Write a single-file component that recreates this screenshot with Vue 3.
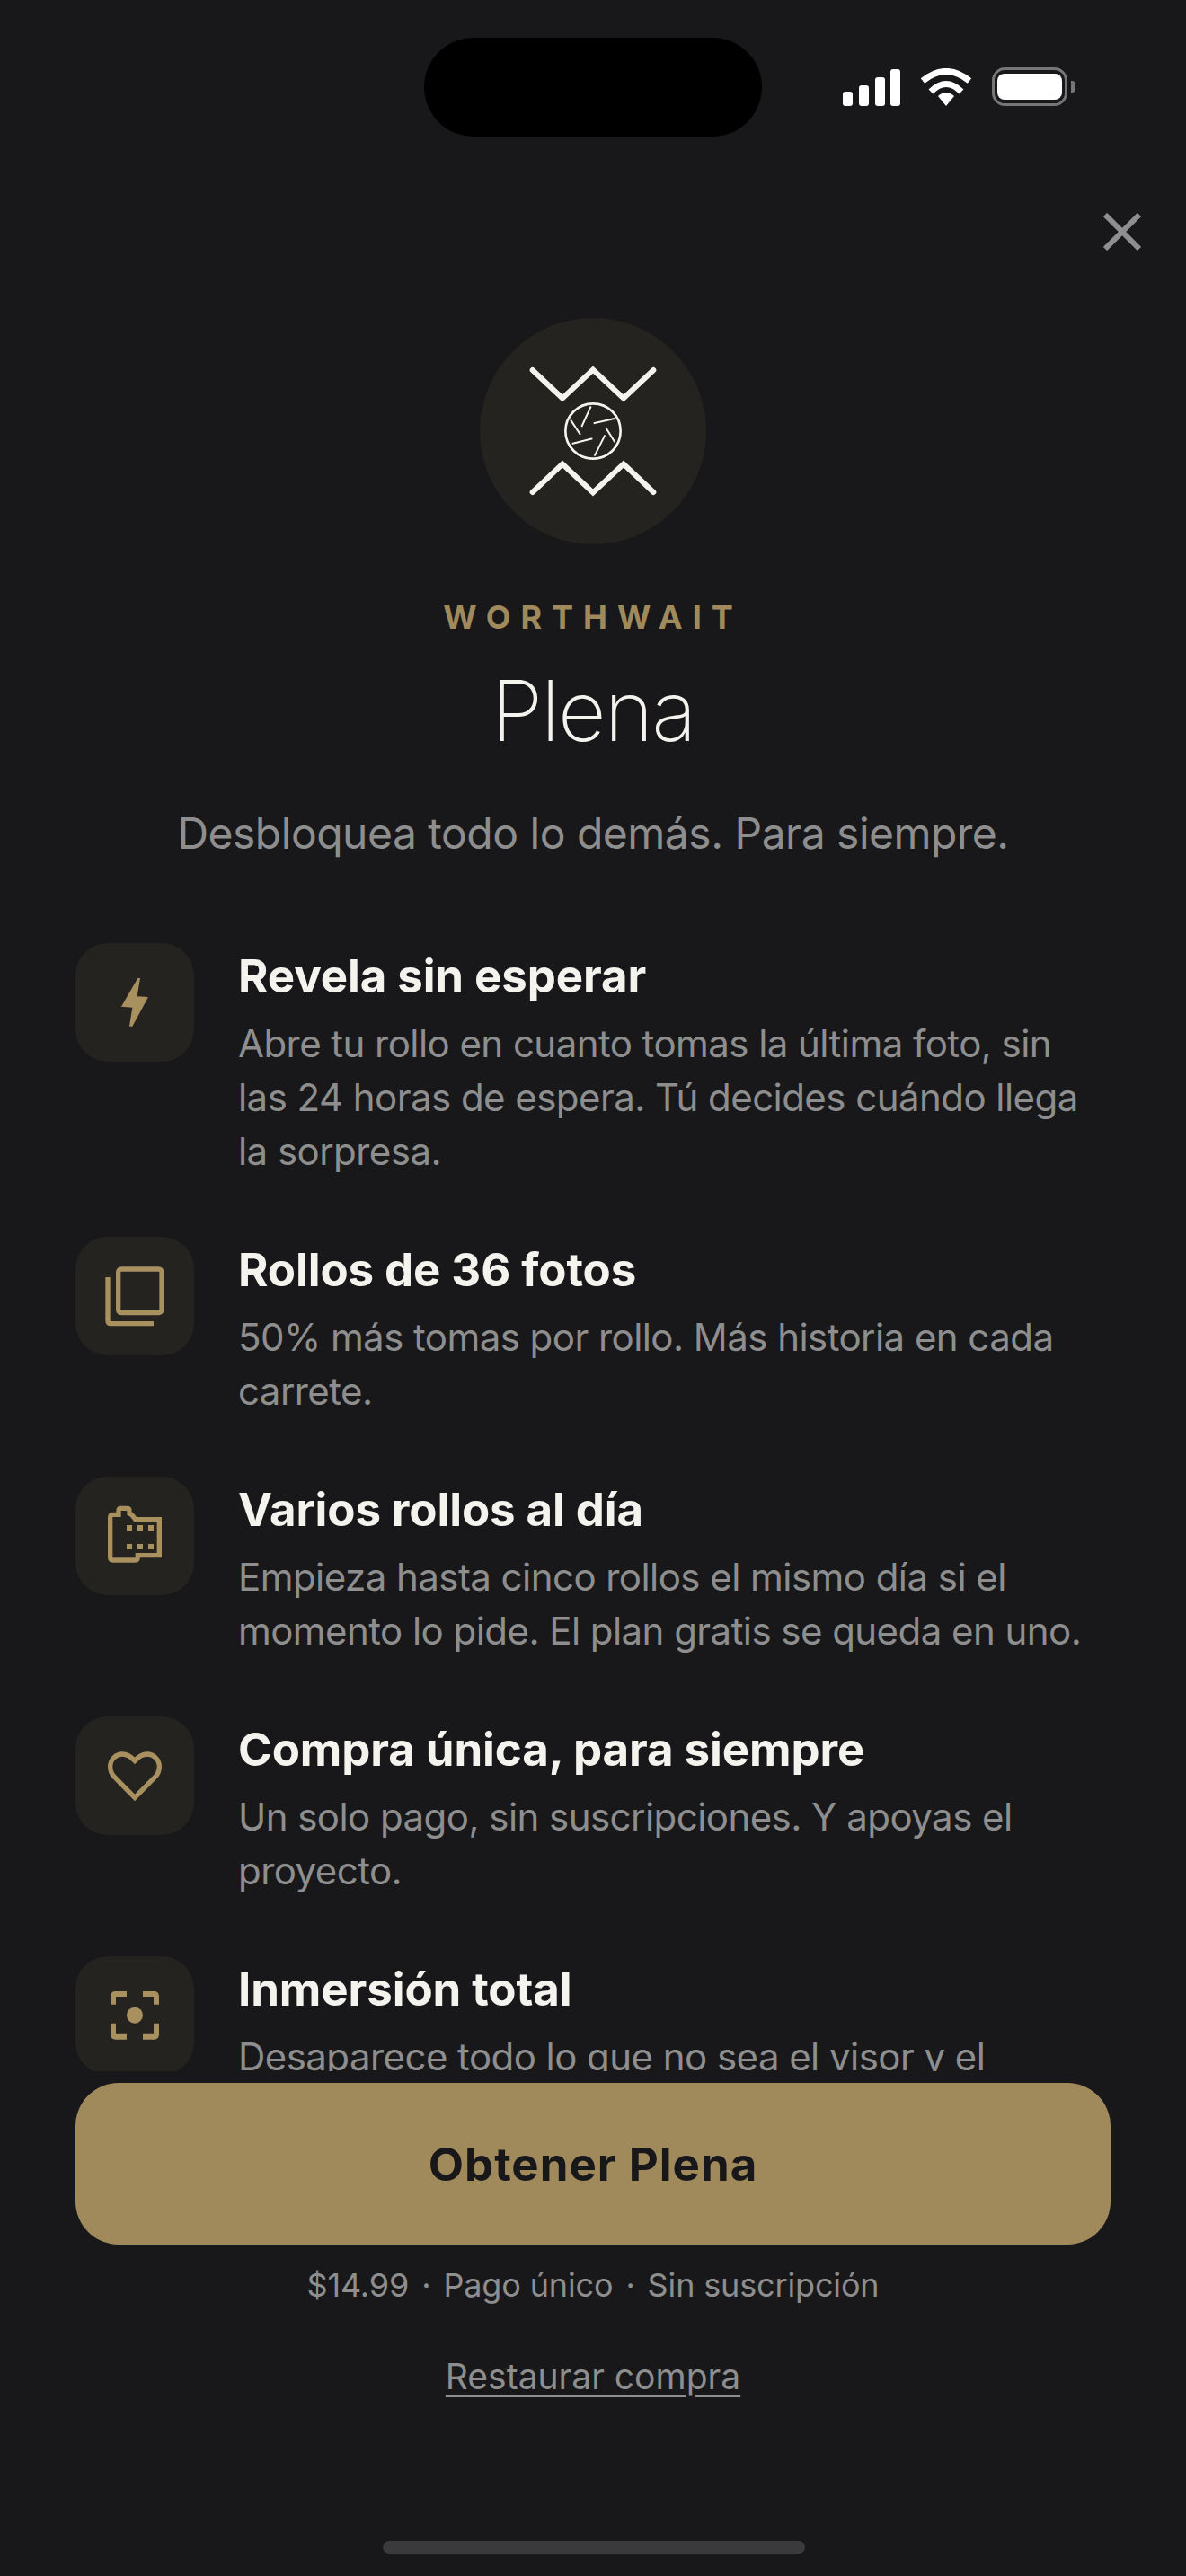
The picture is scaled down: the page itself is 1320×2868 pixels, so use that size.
<script setup>
const features = [
  { key: 'bolt', top: 60, title: 'Revela sin esperar', desc: ['Abre tu rollo en cuanto tomas la última foto, sin', 'las 24 horas de espera. Tú decides cuándo llega', 'la sorpresa.'] },
  { key: 'copy', top: 50, title: 'Rollos de 36 fotos', desc: ['50% más tomas por rollo. Más historia en cada', 'carrete.'] },
  { key: 'film', top: 72, title: 'Varios rollos al día', desc: ['Empieza hasta cinco rollos el mismo día si el', 'momento lo pide. El plan gratis se queda en uno.'] },
  { key: 'heart', top: 62, title: 'Compra única, para siempre', desc: ['Un solo pago, sin suscripciones. Y apoyas el', 'proyecto.'] },
  { key: 'focus', top: 865, title: 'Inmersión total', desc: ['Desaparece todo lo que no sea el visor y el'] },
]
const filmDots = [252, 288, 324].flatMap((x) => [243, 306].map((y) => ({ x: x - 9, y: y - 9 })))
</script>

<template>
  <main class="screen">
    <div class="island"></div>
    <div class="status">
      <svg class="signal" viewBox="0 0 64 41" width="64" height="41">
        <rect x="0" y="25" width="11" height="16" rx="3" />
        <rect x="18" y="18" width="11" height="23" rx="3" />
        <rect x="36" y="9" width="11" height="32" rx="3" />
        <rect x="53" y="0" width="11" height="41" rx="3" />
      </svg>
      <svg class="wifi" viewBox="0 0 58 42" width="58" height="42">
        <path d="M3 14Q29 -7 55 14" />
        <path d="M12 26Q29 9 46 26" />
        <path class="wedge" d="M20 31Q29 23 38 31L29 42Z" />
      </svg>
      <svg class="battery" viewBox="0 0 93 43" width="93" height="43">
        <rect x="1.5" y="1.5" width="81" height="40" rx="13" class="shell" />
        <rect x="6" y="7" width="72" height="29" rx="8" class="charge" />
        <path d="M88 15h1q4 0 4 4v5q0 4-4 4h-1Z" class="cap" />
      </svg>
    </div>
    <button class="close" aria-label="Cerrar">
      <svg viewBox="0 0 42 42" width="42" height="42"><path d="M2 2L40 40M40 2L2 40" /></svg>
    </button>

    <section class="scroll">
      <header class="hero">
        <div class="logo">
          <svg viewBox="72 42 756 756" width="252" height="252">
            <path class="zig" d="M248 216L348 310L450 215L552 310L652 216" />
            <path class="zig" d="M248 624L348 530L450 625L552 530L652 624" />
            <circle class="ring" cx="450" cy="420" r="92" />
            <path class="blades" d="M443 337L412 405M522 378L452 394M492 407L523 457M490 433L455 503M448 445L380 462M375 382L408 432" />
          </svg>
        </div>
        <p class="eyebrow">WORTHWAIT</p>
        <h1>Plena</h1>
        <p class="tagline">Desbloquea todo lo demás. Para siempre.</p>
      </header>

      <ul class="features">
        <li v-for="f in features" :key="f.key" class="feature">
          <div class="tile">
            <svg :viewBox="`72 ${f.top} 396 396`" width="132" height="132">
              <path v-if="f.key === 'bolt'" class="fill" d="M280 177L288 177L278 238L315 240L262 338L252 338L262 275L225 272Z" />
              <g v-else-if="f.key === 'copy'" class="line">
                <rect x="215" y="158" width="145" height="146" rx="10" />
                <path d="M180 185V330Q180 340 190 340H333" />
              </g>
              <g v-else-if="f.key === 'film'">
                <path class="line" d="M280 335V342Q280 351 271 351H197Q188 351 188 342V208Q188 199 197 199H216V186Q216 178 224 178H244Q252 178 252 186V195Q262 199 272 215H352V335Z" />
                <rect v-for="d in filmDots" :key="`${d.x}-${d.y}`" class="fill" :x="d.x" :y="d.y" width="18" height="18" />
              </g>
              <path v-else-if="f.key === 'heart'" class="line" d="M270 333L200 262Q188 248 188 230C188 205 208 188 228 188C245 188 258 197 270 210C282 197 295 188 312 188C332 188 352 205 352 230Q352 248 340 262Z" />
              <g v-else>
                <path class="line thick" d="M198 1026V999Q198 991 206 991H243M297 991H334Q342 991 342 999V1026M342 1089V1126Q342 1134 334 1134H297M243 1134H206Q198 1134 198 1126V1089" />
                <circle class="fill" cx="270" cy="1062" r="27" />
              </g>
            </svg>
          </div>
          <div class="copy">
            <h2>{{ f.title }}</h2>
            <p v-for="line in f.desc" :key="line">{{ line }}</p>
          </div>
        </li>
      </ul>
    </section>

    <footer class="footer">
      <button class="cta">Obtener Plena</button>
      <p class="price"><span>$14.99</span><i>·</i><span>Pago único</span><i>·</i><span>Sin suscripción</span></p>
      <a class="restore">Restaurar compra</a>
    </footer>
    <div class="home"></div>
  </main>
</template>

<style>
html, body { margin: 0; background: #18181a; }
</style>

<style scoped>
.screen {
  position: relative;
  width: 1320px;
  height: 2868px;
  display: flex;
  flex-direction: column;
  background: #18181a;
  color: #f5f3ee;
  font-family: Inter, "Noto Sans", sans-serif;
  overflow: hidden;
}
.island {
  position: absolute;
  left: 472px;
  top: 42px;
  width: 376px;
  height: 110px;
  border-radius: 55px;
  background: #000;
}
.status {
  position: absolute;
  left: 938px;
  top: 75px;
  display: flex;
  align-items: flex-end;
  gap: 22px;
}
.status svg { display: block; }
.signal rect { fill: #fff; }
.wifi path { fill: none; stroke: #fff; stroke-width: 7; }
.wifi .wedge { fill: #fff; stroke: none; }
.shell { fill: none; stroke: #767676; stroke-width: 3; }
.charge { fill: #fff; }
.cap { fill: #767676; }
.close {
  position: absolute;
  left: 1228px;
  top: 237px;
  width: 42px;
  height: 42px;
  padding: 0;
  border: 0;
  background: none;
}
.close svg { display: block; }
.close path { fill: none; stroke: #8e8e8e; stroke-width: 6; }

.scroll {
  height: 2306px;
  flex: none;
  overflow: hidden;
  box-sizing: border-box;
  padding: 354px 84px 0;
}
.hero { display: flex; flex-direction: column; align-items: center; }
.logo {
  width: 252px;
  height: 252px;
  border-radius: 50%;
  background: #252320;
}
.logo svg { display: block; }
.zig { fill: none; stroke: #f5f3ee; stroke-width: 18; stroke-linecap: round; stroke-linejoin: miter; }
.ring { fill: none; stroke: #f5f3ee; stroke-width: 8; }
.blades { fill: none; stroke: #f5f3ee; stroke-width: 6; }
.eyebrow {
  margin: 54px 0 0;
  font-size: 36px;
  line-height: 54px;
  font-weight: 700;
  letter-spacing: 11px;
  color: #a08a5c;
}
h1 {
  margin: 22px 0 0;
  font-size: 93px;
  line-height: 110px;
  font-weight: 200;
  letter-spacing: -2px;
}
.tagline {
  margin: 50px 0 0;
  font-size: 48px;
  line-height: 64px;
  font-weight: 400;
  letter-spacing: -0.5px;
  color: #8e8e8e;
}

.features {
  list-style: none;
  margin: 90px 0 0;
  padding: 0;
  display: flex;
  flex-direction: column;
  gap: 65px;
}
.feature { display: flex; gap: 49px; }
.tile {
  flex: none;
  width: 132px;
  height: 132px;
  border-radius: 36px;
  background: #252320;
}
.tile svg { display: block; }
.fill { fill: #a8915f; }
.line, .line rect, .line path { fill: none; stroke: #a8915f; stroke-width: 16; }
.thick { stroke-width: 18; }
.copy { min-width: 0; padding-top: 7px; }
h2 {
  margin: 0 0 15px;
  font-size: 51px;
  line-height: 60px;
  font-weight: 700;
  letter-spacing: -0.1px;
  color: #f5f3ee;
}
.copy p {
  margin: 0;
  font-size: 42px;
  line-height: 60px;
  letter-spacing: -0.55px;
  color: #8e8e8e;
  white-space: nowrap;
}

.footer {
  padding: 13px 84px 0;
  display: flex;
  flex-direction: column;
  align-items: center;
}
.cta {
  width: 100%;
  height: 180px;
  border: 0;
  border-radius: 48px;
  background: #a08a5c;
  color: #18181a;
  font-family: inherit;
  font-size: 51px;
  font-weight: 700;
  letter-spacing: 1px;
}
.price {
  margin: 20px 0 0;
  display: flex;
  gap: 14px;
  font-size: 36px;
  line-height: 50px;
  letter-spacing: -0.15px;
  color: #8e8e8e;
}
.price i { font-style: normal; }
.restore {
  margin-top: 52px;
  font-size: 39px;
  line-height: 50px;
  color: #8e8e8e;
  text-decoration: underline;
  text-underline-offset: 6px;
}
.home {
  position: absolute;
  left: 426px;
  top: 2829px;
  width: 470px;
  height: 14px;
  border-radius: 7px;
  background: #3a3a3c;
}
</style>
